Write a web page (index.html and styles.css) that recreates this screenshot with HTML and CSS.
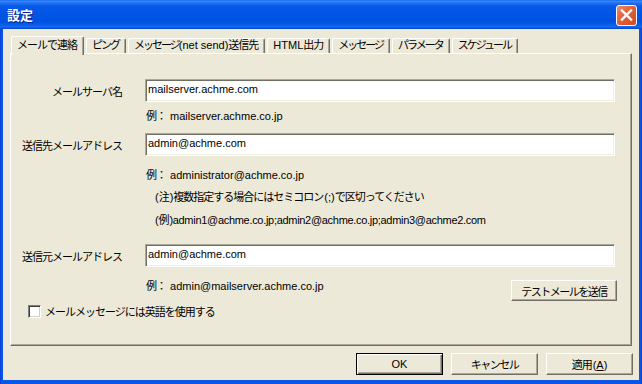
FILE: index.html
```html
<!DOCTYPE html>
<html lang="ja">
<head>
<meta charset="utf-8">
<title>設定</title>
<link rel="stylesheet" href="styles.css">
</head>
<body>
<div class="window">
  <div class="titlebar">
    <span class="title">設定</span>
    <span class="close">
      <svg width="19" height="19" viewBox="0 0 19 19"><path d="M5 4.5 L14 13.5 M14 4.5 L5 13.5" stroke="#fff" stroke-width="2.4" stroke-linecap="square"/></svg>
    </span>
  </div>
  <div class="client">
    <div class="tabs">
      <div class="tab active"><span class="j">メールで連絡</span></div>
      <div class="tab"><span class="k">ピング</span></div>
      <div class="tab"><span class="k">メッセージ</span>(net send)<span class="j">送信先</span></div>
      <div class="tab">HTML<span class="j">出力</span></div>
      <div class="tab"><span class="k">メッセージ</span></div>
      <div class="tab"><span class="k">パラメータ</span></div>
      <div class="tab"><span class="k">スケジュール</span></div>
    </div>
    <div class="panel">
      <div class="row r1">
        <span class="label j">メールサーバ名</span>
        <input class="field" type="text" value="mailserver.achme.com">
      </div>
      <div class="hint h1"><span class="j">例：</span> mailserver.achme.co.jp</div>
      <div class="row r2">
        <span class="label j">送信先メールアドレス</span>
        <input class="field" type="text" value="admin@achme.com">
      </div>
      <div class="hint h2"><span class="j">例：</span> administrator@achme.co.jp</div>
      <div class="note n1">(<span class="j">注</span>)<span class="j">複数指定する場合にはセミコロン</span>(;)<span class="j">で区切ってください</span></div>
      <div class="note n2">(<span class="j">例</span>)admin1@achme.co.jp;admin2@achme.co.jp;admin3@achme2.com</div>
      <div class="row r3">
        <span class="label j">送信元メールアドレス</span>
        <input class="field" type="text" value="admin@achme.com">
      </div>
      <div class="row r4">
        <div class="hint h3"><span class="j">例：</span> admin@mailserver.achme.co.jp</div>
        <button class="btn test"><span class="k">テストメールを送信</span></button>
      </div>
      <div class="check">
        <span class="box"></span>
        <span class="j">メールメッセージには英語を使用する</span>
      </div>
    </div>
    <div class="buttons">
      <button class="btn default">OK</button>
      <button class="btn"><span class="k">キャンセル</span></button>
      <button class="btn"><span class="j">適用</span>(<u>A</u>)</button>
    </div>
  </div>
</div>
</body>
</html>
```
FILE: styles.css
```css
* { box-sizing: border-box; }
html, body { margin: 0; padding: 0; }
body {
  width: 642px;
  height: 384px;
  overflow: hidden;
  font-family: "Liberation Sans", "Noto Sans CJK JP", sans-serif;
  font-size: 11px;
  color: #000;
  background: #0b4fda;
}
.j { letter-spacing: -1px; }
.k { letter-spacing: -1.5px; }
.tab .k { letter-spacing: -2px; }
.hint .j, .note .j, .btn .j { margin-right: 1px; }

.window {
  width: 642px;
  height: 384px;
  display: flex;
  flex-direction: column;
  background: linear-gradient(to right, #0831c8 0, #0a55e6 1px, #0a55e6 641px, #0831c8 642px);
}

.titlebar {
  height: 29px;
  flex: none;
  display: flex;
  align-items: flex-start;
  justify-content: space-between;
  padding: 0 5px 0 7px;
  background: linear-gradient(to bottom, #0a5deb 0, #3b8cf8 1px, #1f72f2 3px, #0859e8 6px, #0055e5 14px, #0052e0 22px, #0660ec 25px, #1668f0 27px, #0042c4 29px);
}
.title {
  margin-top: 5px;
  font-family: "Noto Sans CJK JP", sans-serif;
  font-weight: bold;
  font-size: 13px;
  line-height: 19px;
  color: #fff;
  text-shadow: 1px 1px #0a1e8c;
}
.close {
  margin-top: 5px;
  width: 21px;
  height: 21px;
  display: flex;
  align-items: center;
  justify-content: center;
  border: 1px solid #fff;
  border-radius: 3px;
  background: linear-gradient(135deg, #f08a68 0, #e2603a 45%, #cf4a22 100%);
}
.close svg { display: block; }

.client {
  flex: 1;
  margin: 0 3px 4px 3px;
  background: #ece9d8;
  display: flex;
  flex-direction: column;
}

.tabs {
  margin-top: 7px;
  height: 17px;
  padding-left: 8px;
  display: flex;
  align-items: flex-end;
  gap: 2px;
  position: relative;
  z-index: 1;
}
.tab {
  height: 15px;
  padding: 0 6px 0 5px;
  line-height: 13px;
  white-space: nowrap;
  border-left: 1px solid #fff;
  border-top: 1px solid #fff;
  border-right: 1px solid #716f64;
  box-shadow: inset -1px 0 #aca899;
  border-radius: 2px 2px 0 0;
  background: #ece9d8;
}
.tab.active {
  height: 19px;
  line-height: 17px;
  margin-bottom: -2px;
}

.panel {
  height: 293px;
  margin: 0 7px;
  border: 1px solid;
  border-color: #fff #716f64 #716f64 #fff;
  box-shadow: inset -1px -1px #aca899;
  display: flex;
  flex-direction: column;
}

.row {
  display: flex;
  align-items: center;
  height: 23px;
}
.label {
  width: 134px;
  padding-right: 23px;
  text-align: right;
  white-space: nowrap;
}
.field {
  width: 470px;
  height: 23px;
  margin: 0;
  padding: 0 2px 4px 2px;
  font-family: "Liberation Sans", "Noto Sans CJK JP", sans-serif;
  font-size: 11px;
  color: #000;
  background: #fff;
  border: 1px solid;
  border-color: #aca899 #fff #fff #aca899;
  box-shadow: inset 1px 1px #716f64, inset -1px -1px #f1efe2;
  outline: none;
}
.r1 { margin-top: 25px; }
.r2 { margin-top: 9px; }
.r3 { margin-top: 16px; }

.hint, .note {
  height: 16px;
  line-height: 16px;
  white-space: nowrap;
}
.hint { padding-left: 135px; }
.note { padding-left: 144px; }
.h1 { margin-top: 6px; }
.h2 { margin-top: 11px; }
.n1 { margin-top: 6px; }
.n2 { margin-top: 7px; letter-spacing: -0.3px; }

.r4 {
  margin-top: 11px;
  align-items: flex-start;
  padding-right: 14px;
}
.r4 .hint { flex: 1; }
.btn {
  margin: 0;
  padding: 0;
  font-family: "Liberation Sans", "Noto Sans CJK JP", sans-serif;
  font-size: 11px;
  color: #000;
  background: #ece9d8;
  border: 1px solid;
  border-color: #fff #716f64 #716f64 #fff;
  box-shadow: inset -1px -1px #aca899;
  white-space: nowrap;
}
.test {
  width: 106px;
  height: 21px;
  margin-top: 2px;
}

.check {
  margin-top: 2px;
  height: 16px;
  display: flex;
  align-items: center;
  padding-left: 17px;
  gap: 4px;
}
.box {
  width: 13px;
  height: 13px;
  background: #fff;
  border: 1px solid;
  border-color: #808080 #fff #fff #808080;
  box-shadow: inset 1px 1px #404040, inset -1px -1px #d4d0c8;
}

.buttons {
  margin-top: 7px;
  display: flex;
  justify-content: flex-end;
  gap: 8px;
  padding-right: 6px;
}
.buttons .btn {
  width: 87px;
  height: 22px;
}
.buttons .btn.default {
  border: 1px solid #000;
  box-shadow: inset 1px 1px #fff, inset -1px -1px #716f64, inset -2px -2px #aca899;
}
u { text-decoration: underline; }
```
